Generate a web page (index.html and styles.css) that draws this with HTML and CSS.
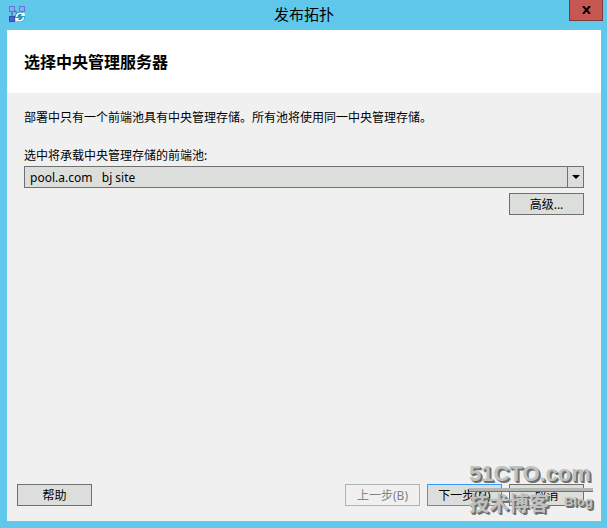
FILE: index.html
```html
<!DOCTYPE html>
<html lang="zh-CN">
<head>
    <meta charset="UTF-8">
    <title>发布拓扑</title>
    <link rel="stylesheet" href="styles.css">
</head>
<body>
<div class="window">
    <div class="titlebar">
        <svg class="app-icon" width="18" height="18" viewBox="0 0 18 18">
            <path d="M4 6v6M6 5l4 4 4-4M6 12l4-3" fill="none" stroke="#5b72b8" stroke-width="1.5"/>
            <rect x="1.500" y="1.500" width="5" height="5" fill="#8fa8f0" stroke="#5f78d0"/>
            <rect x="11.500" y="1.500" width="5" height="5" fill="#8fa8f0" stroke="#5f78d0"/>
            <rect x="1.500" y="11.500" width="5" height="5" fill="#3f66d8" stroke="#3450a8"/>
            <circle cx="12" cy="12" r="5" fill="#259cc8"/>
            <path d="M8.500 12c0-4 5-5 6.500-2M15.500 12c0 4-5 5-6.500 2" fill="none" stroke="#fff" stroke-width="1.500"/>
            <path d="M13 11h4l-1-4zM7 13h4l-3 4z" fill="#fff"/>
        </svg>
        <span class="title">发布拓扑</span>
        <button class="close" aria-label="关闭">
            <svg width="9" height="8" viewBox="0 0 9 8">
                <path d="M1 0L8 8M8 0L1 8" stroke="#000" stroke-width="2"/>
            </svg>
        </button>
    </div>

    <div class="header">
        <h1>选择中央管理服务器</h1>
    </div>

    <div class="content">
        <p>部署中只有一个前端池具有中央管理存储。所有池将使用同一中央管理存储。</p>

        <label for="pool">选中将承载中央管理存储的前端池:</label>
        <div class="combo">
            <select id="pool">
                <option>pool.a.com&nbsp;&nbsp;&nbsp;bj site</option>
            </select>
            <span class="arrow"></span>
        </div>
        <div class="advanced">
            <button class="btn">高级...</button>
        </div>
    </div>

    <div class="footer">
        <button class="btn help">帮助</button>
        <button class="btn" disabled>上一步(B)</button>
        <button class="btn next">下一步(N)</button>
        <button class="btn">取消</button>
    </div>

    <div class="watermark">
        <div class="site">51CTO.com</div>
        <div class="sub">
            <span>技术博客</span>
            <span class="blog">Blog</span>
        </div>
    </div>
</div>
</body>
</html>
```

FILE: styles.css
```css
* {
    box-sizing: border-box;
}

body {
    margin: 0;
    font-family: "Noto Sans", "Noto Sans CJK SC", sans-serif;
    font-size: 12px;
    line-height: 18px;
    color: #000;
}

.window {
    position: relative;
    display: flex;
    flex-direction: column;
    min-height: 100vh;
    padding: 0 6px 7px 7px;
    background: #60c8ea;
}

.titlebar {
    position: relative;
    height: 30px;
    text-align: center;
}

.app-icon {
    position: absolute;
    left: 1px;
    top: 5px;
}

.title {
    font-size: 15px;
    line-height: 28px;
}

.close {
    position: absolute;
    top: 0;
    right: -2px;
    width: 34px;
    height: 21px;
    padding: 0;
    background: #c75753;
    border: 1px solid #7b3c38;
    border-top: none;
    line-height: 8px;
}

.header {
    padding: 20px 17px 19px;
    background: #fff;
}

.header h1 {
    margin: 0;
    font-size: 16px;
    line-height: 24px;
}

.content {
    flex: 1;
    padding: 16px 17px;
    background: #f0f0f0;
}

.content p {
    margin: 0 0 20px;
}

.content label {
    display: block;
    margin-bottom: 1px;
}

.combo {
    position: relative;
}

.combo select {
    display: block;
    width: 100%;
    height: 22px;
    padding: 1px 20px 0 5px;
    appearance: none;
    background: #dcdedc;
    border: 1px solid #707070;
    border-radius: 0;
    font: inherit;
    color: #000;
}

.arrow {
    position: absolute;
    top: 0;
    right: 0;
    width: 17px;
    height: 22px;
    border: 1px solid #707070;
    pointer-events: none;
}

.arrow::after {
    content: "";
    position: absolute;
    left: 4px;
    top: 8px;
    border: 4px solid transparent;
    border-top-color: #000;
    border-bottom: none;
}

.advanced {
    margin-top: 5px;
    text-align: right;
}

.btn {
    width: 75px;
    height: 22px;
    padding: 2px 0 0;
    background: #dcdedc;
    border: 1px solid #707070;
    font: inherit;
    line-height: 18px;
    color: #000;
}

.btn:disabled {
    background: #f0f0f0;
    border-color: #adb2b5;
    color: #838383;
}

.next {
    border-color: #3399ff;
}

.footer {
    display: flex;
    gap: 7px;
    padding: 0 17px 15px 10px;
    background: #f0f0f0;
}

.help {
    margin-right: auto;
}

.watermark {
    position: absolute;
    right: 14px;
    bottom: 11px;
    width: 124px;
    font-family: "Liberation Sans", "Noto Sans CJK SC", sans-serif;
    font-weight: bold;
    color: #c0c2c0;
    text-shadow: 1px 1px 0 #707070, 2px 2px 0 #707070;
    pointer-events: none;
}

.site {
    border-bottom: 3px solid #b4b6b4;
    box-shadow: 0 1px 0 #707070;
    font-size: 22px;
    line-height: 28px;
    white-space: nowrap;
}

.sub {
    display: flex;
    justify-content: space-between;
    font-size: 20px;
    line-height: 26px;
}

.blog {
    font-size: 13px;
    line-height: 22px;
}
```
